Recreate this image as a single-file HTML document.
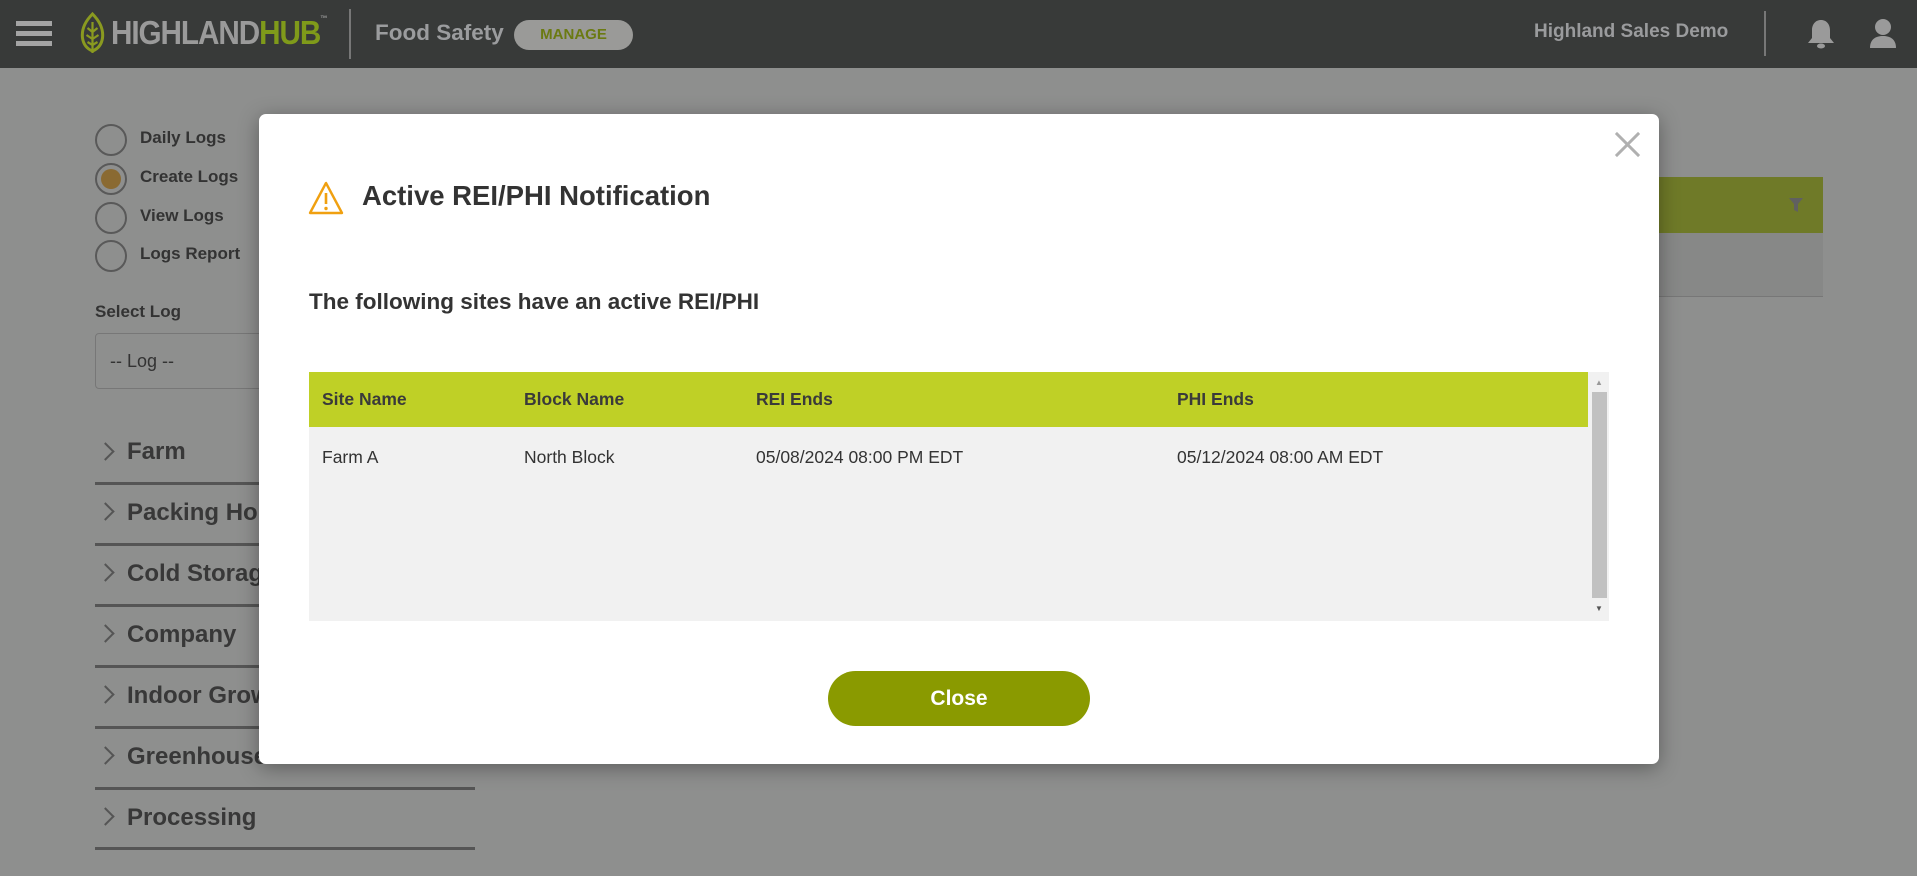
<!DOCTYPE html>
<html><head><meta charset="utf-8"><style>
*{box-sizing:border-box;margin:0;padding:0}
body{width:1917px;height:876px;background:#8e8f8e;font-family:"Liberation Sans",sans-serif;position:relative;overflow:hidden;color:#333}
.hdr{position:absolute;left:0;top:0;width:1917px;height:68px;background:#383a39}
.abs{position:absolute}
.ham{left:16px;width:36px;height:5px;background:#a4a4a4}
.radio{position:absolute;left:95px;width:32px;height:32px;border:2px solid #595959;border-radius:50%}
.rl{position:absolute;left:140px;font-size:17px;font-weight:bold;color:#333}
.acc{position:absolute;left:95px;width:380px;height:3px;background:#555}
.at{position:absolute;left:127px;font-size:24px;font-weight:bold;color:#383838}
.chev{position:absolute;left:99px;width:13px;height:13px;border-right:2px solid #555;border-top:2px solid #555;transform:rotate(45deg)}
.modal{position:absolute;left:259px;top:114px;width:1400px;height:650px;background:#fff;border-radius:7px;box-shadow:0 4px 20px rgba(0,0,0,.35)}
.th{position:absolute;top:0;font-size:17.5px;font-weight:bold;color:#3a3a3a;line-height:55px}
.td{position:absolute;font-size:17.5px;color:#333}
</style></head><body>
<div class="hdr">
 <div class="abs ham" style="top:21px"></div><div class="abs ham" style="top:31px"></div><div class="abs ham" style="top:41px"></div>
 <svg class="abs" style="left:79px;top:12px" width="27" height="43" viewBox="0 0 26 43"><path d="M13 2C5 10 2 18 3 26c1 7 5 11 10 13 5-2 9-6 10-13 1-8-2-16-10-24z" fill="none" stroke="#8a9a20" stroke-width="3"/><path d="M13 10v31M13 20l-5-4M13 20l5-4M13 27l-6-4M13 27l6-4M13 33l-5-3M13 33l5-3" stroke="#8a9a20" stroke-width="2.2" fill="none"/></svg>
 <div class="abs" style="left:111px;top:14px;font-size:33px;font-weight:bold;letter-spacing:-1.2px;color:#9a9a9a;transform:scaleX(.9);transform-origin:left;white-space:nowrap">HIGHLAND<span style="color:#7f9a1a">HUB</span><span style="font-size:8px;vertical-align:top">™</span></div>
 <div class="abs" style="left:349px;top:9px;width:2px;height:50px;background:#777"></div>
 <div class="abs" style="left:375px;top:20px;font-size:22.5px;font-weight:bold;color:#9b9c9e;white-space:nowrap">Food Safety</div>
 <div class="abs" style="left:514px;top:20px;width:119px;height:30px;border-radius:15px;background:#9a9a98;color:#6b7a12;font-size:15px;font-weight:bold;text-align:center;line-height:30px">MANAGE</div>
 <div class="abs" style="left:1534px;top:21px;font-size:19px;font-weight:bold;color:#9a9b9d">Highland Sales Demo</div>
 <div class="abs" style="left:1764px;top:11px;width:2px;height:45px;background:#777"></div>
 <svg class="abs" style="left:1806px;top:18px" width="30" height="32" viewBox="0 0 30 32"><path d="M15 2c-6 0-9 5-9 10v8l-4 5h26l-4-5v-8c0-5-3-10-9-10z" fill="#9a9a9a"/><ellipse cx="15" cy="28" rx="4" ry="2.5" fill="#9a9a9a"/></svg>
 <svg class="abs" style="left:1868px;top:18px" width="30" height="32" viewBox="0 0 30 32"><circle cx="15" cy="9" r="8" fill="#9a9a9a"/><path d="M2 30c0-9 6-12 13-12s13 3 13 12z" fill="#9a9a9a"/></svg>
</div>

<div class="radio" style="top:124px"></div><div class="rl" style="top:128px">Daily Logs</div>
<div class="radio" style="top:163px"></div><div class="abs" style="left:101px;top:169px;width:20px;height:20px;border-radius:50%;background:#8a6a32"></div><div class="rl" style="top:167px">Create Logs</div>
<div class="radio" style="top:202px"></div><div class="rl" style="top:206px">View Logs</div>
<div class="radio" style="top:240px"></div><div class="rl" style="top:244px">Logs Report</div>
<div class="rl" style="left:95px;top:302px">Select Log</div>
<div class="abs" style="left:95px;top:333px;width:200px;height:56px;border:1px solid #777;border-radius:4px;font-size:18px;color:#333;padding:17px 14px">-- Log --</div>

<div class="chev" style="top:445px"></div><div class="at" style="top:438px">Farm</div><div class="acc" style="top:482px"></div>
<div class="chev" style="top:505px"></div><div class="at" style="top:499px">Packing House</div><div class="acc" style="top:543px"></div>
<div class="chev" style="top:566px"></div><div class="at" style="top:560px">Cold Storage</div><div class="acc" style="top:604px"></div>
<div class="chev" style="top:627px"></div><div class="at" style="top:621px">Company</div><div class="acc" style="top:665px"></div>
<div class="chev" style="top:688px"></div><div class="at" style="top:682px">Indoor Grow</div><div class="acc" style="top:726px"></div>
<div class="chev" style="top:749px"></div><div class="at" style="top:743px">Greenhouse</div><div class="acc" style="top:787px"></div>
<div class="chev" style="top:810px"></div><div class="at" style="top:804px">Processing</div><div class="acc" style="top:847px"></div>

<div class="abs" style="left:1560px;top:177px;width:263px;height:56px;background:#6f7a28"></div>
<div class="abs" style="left:1645px;top:196px;font-size:18px;font-weight:bold;color:#333">e</div>
<svg class="abs" style="left:1788px;top:197px" width="16" height="16" viewBox="0 0 16 16"><path d="M1 1h14l-5 6v8l-4-2V7z" fill="#606060"/></svg>
<div class="abs" style="left:1560px;top:233px;width:263px;height:64px;background:#878887;border-bottom:1px solid #777"></div>

<div class="modal">
 <svg class="abs" style="left:1355px;top:17px" width="27" height="27" viewBox="0 0 28 28"><path d="M2 2l24 24M26 2L2 26" stroke="#b0b0b0" stroke-width="3"/></svg>
 <svg class="abs" style="left:48px;top:66px" width="38" height="36" viewBox="0 0 38 36"><path d="M19 3L3 33h32z" fill="none" stroke="#f0a010" stroke-width="2.4" stroke-linejoin="round"/><path d="M19 13v11" stroke="#f0a010" stroke-width="2.6"/><circle cx="19" cy="28.5" r="1.7" fill="#f0a010"/></svg>
 <div class="abs" style="left:103px;top:66px;font-size:27.5px;font-weight:bold;color:#333;white-space:nowrap">Active REI/PHI Notification</div>
 <div class="abs" style="left:50px;top:175px;font-size:22.5px;font-weight:bold;color:#333;white-space:nowrap">The following sites have an active REI/PHI</div>
 <div class="abs" style="left:50px;top:258px;width:1300px;height:249px;background:#f1f1f1">
  <div class="abs" style="left:0;top:0;width:1279px;height:55px;background:#bfd026"></div>
  <div class="th" style="left:13px">Site Name</div>
  <div class="th" style="left:215px">Block Name</div>
  <div class="th" style="left:447px">REI Ends</div>
  <div class="th" style="left:868px">PHI Ends</div>
  <div class="td" style="left:13px;top:75px">Farm A</div>
  <div class="td" style="left:215px;top:75px">North Block</div>
  <div class="td" style="left:447px;top:75px">05/08/2024 08:00 PM EDT</div>
  <div class="td" style="left:868px;top:75px">05/12/2024 08:00 AM EDT</div>
  <div class="abs" style="left:1281px;top:0;width:19px;height:249px;background:#f1f1f1"></div>
  <div class="abs" style="left:1283px;top:20px;width:15px;height:206px;background:#c1c1c1"></div>
  <div class="abs" style="left:1286px;top:6px;font-size:8px;color:#999">▲</div>
  <div class="abs" style="left:1286px;top:232px;font-size:8px;color:#555">▼</div>
 </div>
 <div class="abs" style="left:569px;top:557px;width:262px;height:55px;border-radius:28px;background:#8a9a00;color:#fff;font-size:21px;font-weight:bold;text-align:center;line-height:55px">Close</div>
</div>
</body></html>
